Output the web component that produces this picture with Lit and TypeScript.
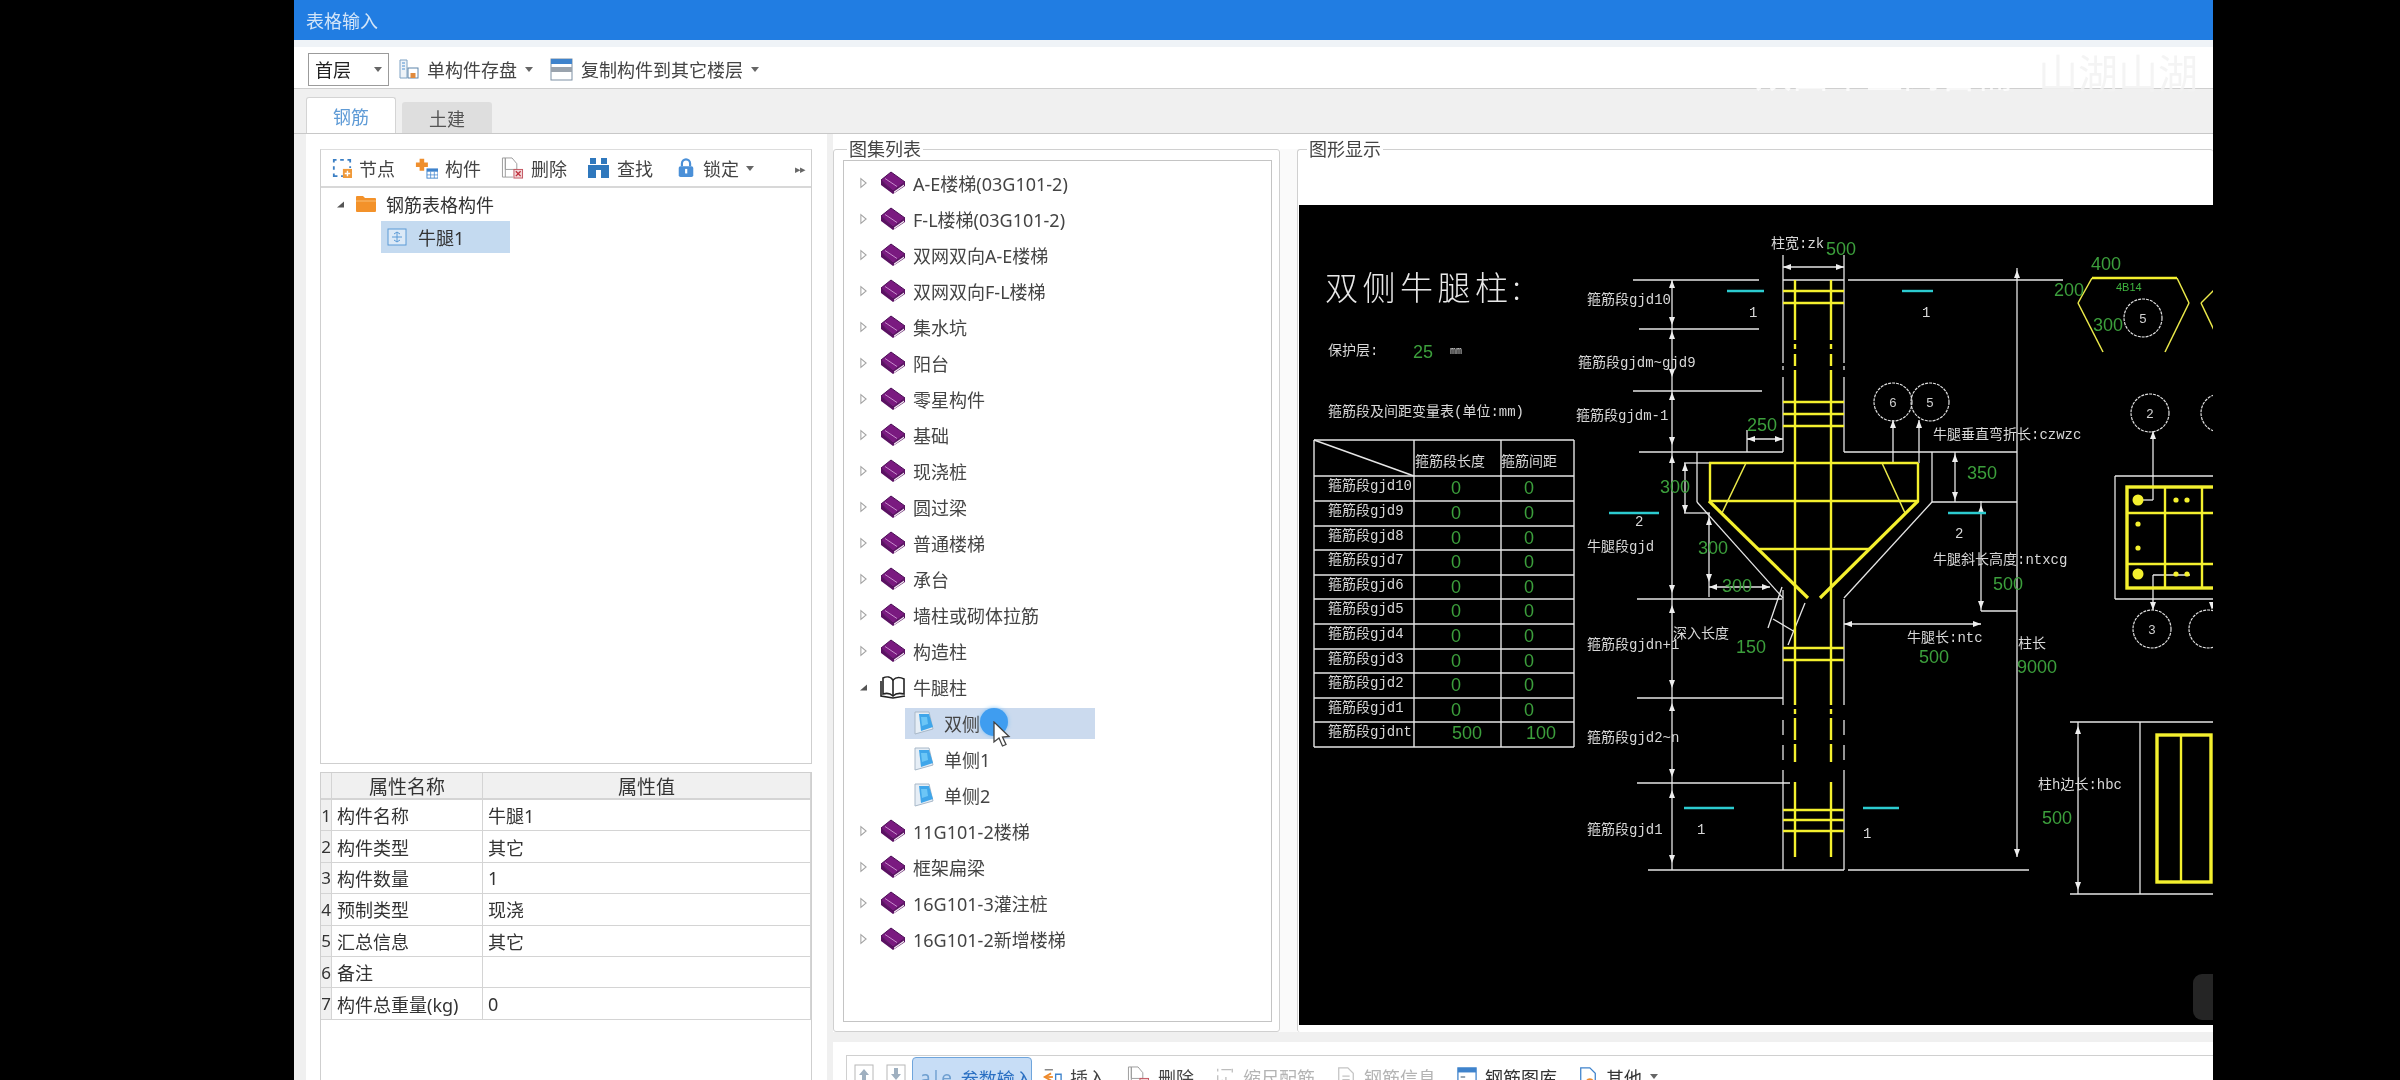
import { css, html, svg, LitElement } from "lit";
import { customElement } from "lit/decorators.js";

type Seg = [number, number, number, number];

const WHITE_LINES: Seg[] = [
  [1633, 280, 1759, 280], [1783, 280, 1844, 280], [1848, 280, 2063, 280],
  [1639, 329, 1759, 329], [1633, 391, 1762, 391], [1639, 452, 1783, 452],
  [1844, 452, 2017, 452], [1932, 502, 2017, 502], [1637, 599, 1782, 599],
  [1637, 698, 1783, 698], [1637, 783, 1790, 783], [1648, 870, 1844, 870],
  [1848, 870, 2029, 870],
  [1783, 255, 1783, 363], [1783, 366, 1783, 370], [1783, 377, 1783, 452],
  [1844, 255, 1844, 363], [1844, 366, 1844, 370], [1844, 377, 1844, 452],
  [1783, 590, 1783, 705], [1783, 720, 1783, 735], [1783, 745, 1783, 760], [1783, 770, 1783, 870],
  [1844, 599, 1844, 705], [1844, 720, 1844, 735], [1844, 745, 1844, 760], [1844, 770, 1844, 870],
  [1783, 267, 1844, 267], [1672, 280, 1672, 870],
  [1697, 452, 1697, 502], [1697, 502, 1783, 598], [1932, 452, 1932, 502], [1932, 502, 1844, 598],
  [1684, 463, 1710, 463], [1685, 463, 1685, 513], [1684, 513, 1710, 513],
  [1709, 513, 1709, 597], [1709, 587, 1770, 587],
  [1747, 430, 1747, 452], [1747, 439, 1783, 439],
  [1893, 420, 1893, 463], [1919, 420, 1919, 463],
  [1955, 452, 1955, 502], [1981, 501, 1981, 611], [1981, 611, 2017, 611],
  [1844, 624, 1981, 624], [2017, 268, 2017, 857],
  [1782, 587, 1768, 628], [1805, 603, 1788, 645], [1773, 619, 1795, 632],
  [2115, 476, 2214, 476], [2115, 476, 2115, 599], [2115, 599, 2214, 599],
  [2138, 500, 2153, 500], [2153, 500, 2153, 431], [2153, 575, 2190, 575], [2153, 575, 2153, 610],
  [2070, 722, 2214, 722], [2070, 894, 2214, 894], [2078, 722, 2078, 894], [2140, 722, 2140, 894],
];

const ARROWS: [number, number, "u" | "d" | "l" | "r"][] = [
  [1783, 267, "l"], [1844, 267, "r"], [1672, 280, "u"], [1672, 325, "d"], [1672, 331, "u"], [1672, 377, "d"],
  [1672, 392, "u"], [1672, 445, "d"], [1672, 455, "u"], [1672, 593, "d"], [1672, 605, "u"], [1672, 688, "d"],
  [1672, 703, "u"], [1672, 777, "d"], [1672, 790, "u"], [1672, 863, "d"],
  [1685, 463, "u"], [1685, 513, "d"], [1709, 517, "u"], [1709, 582, "d"], [1709, 587, "l"], [1770, 587, "r"],
  [1747, 439, "l"], [1783, 439, "r"], [1893, 420, "u"], [1919, 420, "u"],
  [1955, 454, "u"], [1955, 500, "d"], [1981, 505, "u"], [1981, 609, "d"], [1844, 624, "l"], [1981, 624, "r"],
  [2017, 270, "u"], [2017, 857, "d"], [2153, 431, "u"], [2153, 610, "d"], [2212, 610, "d"],
  [2078, 726, "u"], [2078, 890, "d"],
];

const YELLOW_LINES: Seg[] = [
  [1795, 280, 1795, 340], [1795, 344, 1795, 349], [1795, 354, 1795, 366], [1795, 370, 1795, 705],
  [1795, 709, 1795, 714], [1795, 718, 1795, 740], [1795, 744, 1795, 762], [1795, 782, 1795, 857],
  [1831, 280, 1831, 340], [1831, 344, 1831, 349], [1831, 354, 1831, 366], [1831, 370, 1831, 705],
  [1831, 709, 1831, 714], [1831, 718, 1831, 740], [1831, 744, 1831, 762], [1831, 782, 1831, 857],
  [1783, 291, 1844, 291], [1783, 303, 1844, 303], [1783, 402, 1844, 402], [1783, 414, 1844, 414],
  [1783, 426, 1844, 426], [1783, 648, 1844, 648], [1783, 660, 1844, 660], [1783, 810, 1844, 810],
  [1783, 820, 1844, 820], [1783, 831, 1844, 831],
  [1709, 463, 1918, 463], [1710, 463, 1710, 502], [1918, 463, 1918, 502], [1709, 501, 1918, 501],
  [1757, 549, 1870, 549], [2092, 278, 2177, 278],
  [2127, 513, 2214, 513], [2127, 564, 2214, 564], [2165, 487, 2165, 588], [2202, 487, 2202, 588],
  [2181, 735, 2181, 882],
];

const YELLOW_THICK: Seg[] = [[1709, 501, 1808, 598], [1918, 501, 1820, 598]];

const YELLOW_THIN: Seg[] = [
  [1746, 463, 1722, 513], [1882, 463, 1905, 513],
  [2092, 278, 2078, 303], [2078, 303, 2103, 352], [2177, 278, 2189, 303], [2189, 303, 2165, 352],
  [2214, 290, 2201, 303], [2201, 303, 2214, 330],
];

const CYAN_LINES: Seg[] = [
  [1727, 291, 1764, 291], [1902, 291, 1933, 291], [1609, 513, 1659, 513], [1948, 513, 1986, 513],
  [1684, 808, 1734, 808], [1863, 808, 1899, 808],
];

const CIRCLES: [number, number, string][] = [
  [1893, 402, "6"], [1930, 402, "5"], [2143, 318, "5"], [2150, 413, "2"], [2220, 413, ""], [2152, 629, "3"], [2208, 629, ""],
];

const LABELS: [number, number, string][] = [
  [1587, 304, "箍筋段gjd10"], [1578, 367, "箍筋段gjdm~gjd9"], [1576, 420, "箍筋段gjdm-1"], [1587, 551, "牛腿段gjd"],
  [1587, 649, "箍筋段gjdn+1"], [1587, 742, "箍筋段gjd2~n"], [1587, 834, "箍筋段gjd1"], [1673, 638, "深入长度"],
  [1771, 248, "柱宽:zk"], [1933, 439, "牛腿垂直弯折长:czwzc"], [1933, 564, "牛腿斜长高度:ntxcg"], [1907, 642, "牛腿长:ntc"],
  [2018, 648, "柱长"], [2038, 789, "柱h边长:hbc"], [1328, 355, "保护层:"], [1328, 416, "箍筋段及间距变量表(单位:mm)"],
  [1415, 466, "箍筋段长度"], [1501, 466, "箍筋间距"],
  [1749, 317, "1"], [1922, 317, "1"], [1635, 526, "2"], [1955, 538, "2"], [1697, 834, "1"], [1863, 838, "1"],
];

const NUMBERS: [number, number, string][] = [
  [1826, 255, "500"], [1747, 431, "250"], [1660, 493, "300"], [1698, 554, "300"], [1722, 592, "300"], [1736, 653, "150"],
  [1919, 663, "500"], [1967, 479, "350"], [1993, 590, "500"], [2017, 673, "9000"], [2042, 824, "500"],
  [2091, 270, "400"], [2054, 296, "200"], [2093, 331, "300"], [1413, 358, "25"], [1452, 739, "500"], [1526, 739, "100"],
];

const TABLE_ROWS = [476, 501, 526, 550, 575, 599, 624, 649, 673, 698, 722, 747];
const TABLE_NAMES = ["gjd10", "gjd9", "gjd8", "gjd7", "gjd6", "gjd5", "gjd4", "gjd3", "gjd2", "gjd1", "gjdnt"];

function segs(list: Seg[], cls: string) {
  return list.map(([a, b, c, d]) => svg`<line class=${cls} x1=${a} y1=${b} x2=${c} y2=${d}></line>`);
}

function arrowHead([x, y, dir]: [number, number, string]) {
  const pts: Record<string, string> = {
    u: `${x},${y} ${x - 3},${y + 8} ${x + 3},${y + 8}`,
    d: `${x},${y} ${x - 3},${y - 8} ${x + 3},${y - 8}`,
    l: `${x},${y} ${x + 8},${y - 3} ${x + 8},${y + 3}`,
    r: `${x},${y} ${x - 8},${y - 3} ${x - 8},${y + 3}`,
  };
  return svg`<polygon class="head" points=${pts[dir]}></polygon>`;
}

@customElement("cad-diagram")
export class CadDiagram extends LitElement {
  static styles = css`
    :host { display: block; width: 100%; height: 100%; background: #000; }
    svg { display: block; width: 914px; height: 820px; }
    line { stroke-linecap: butt; }
    .w { stroke: #e6e6e6; stroke-width: 1.3; }
    .grid { stroke: #e6e6e6; stroke-width: 1.4; }
    .y { stroke: #f4f02e; stroke-width: 2.4; }
    .yt { stroke: #f4f02e; stroke-width: 3.2; }
    .yn { stroke: #ecea4a; stroke-width: 1.5; }
    .c { stroke: #2ccbd0; stroke-width: 2.4; }
    .head { fill: #eee; }
    .ring { fill: none; stroke: #e0e0e0; stroke-width: 1.2; stroke-dasharray: 3 1; }
    .lbl { font: 14px "Liberation Mono", "Noto Sans CJK SC", monospace; fill: #d8d8d8; }
    .num { font: 18px "Liberation Sans", sans-serif; fill: #3c9f3c; }
    .zero { font: 18px "Liberation Sans", sans-serif; fill: #3c9f3c; text-anchor: middle; }
    .unit { font: 10px "Liberation Mono", monospace; fill: #d8d8d8; }
    .small { font: 11px "Liberation Sans", sans-serif; fill: #3fb53f; }
    .heading { font: 33px "Noto Sans CJK SC", sans-serif; font-weight: 300; fill: #e8e8e8; letter-spacing: 4.5px; }
    .ringtxt { font: 13px "Liberation Mono", monospace; fill: #d0d0d0; text-anchor: middle; }
    .rebar { fill: none; stroke: #f4f02e; stroke-width: 3.4; }
    .dot { fill: #f4f02e; }
    .blob { fill: #252525; }
  `;

  render() {
    return html`<svg viewBox="1299 205 914 820">
      <text class="heading" x="1325" y="300">双侧牛腿柱:</text>
      <text class="unit" x="1450" y="354">mm</text>
      ${TABLE_ROWS.map((y) => svg`<line class="grid" x1="1314" y1=${y} x2="1574" y2=${y}></line>`)}
      <line class="grid" x1="1314" y1="440" x2="1574" y2="440"></line>
      <line class="grid" x1="1314" y1="440" x2="1314" y2="747"></line>
      <line class="grid" x1="1414" y1="440" x2="1414" y2="747"></line>
      <line class="grid" x1="1501" y1="440" x2="1501" y2="747"></line>
      <line class="grid" x1="1574" y1="440" x2="1574" y2="747"></line>
      <line class="grid" x1="1314" y1="440" x2="1414" y2="476"></line>
      ${TABLE_NAMES.map((name, i) => svg`
        <text class="lbl" x="1328" y=${TABLE_ROWS[i] + 14}>箍筋段${name}</text>
        ${i < 10 ? svg`<text class="zero" x="1456" y=${TABLE_ROWS[i] + 18}>0</text>
        <text class="zero" x="1529" y=${TABLE_ROWS[i] + 18}>0</text>` : ""}
      `)}
      ${segs(WHITE_LINES, "w")}
      ${ARROWS.map(arrowHead)}
      ${segs(YELLOW_LINES, "y")}
      ${segs(YELLOW_THICK, "yt")}
      ${segs(YELLOW_THIN, "yn")}
      ${segs(CYAN_LINES, "c")}
      ${CIRCLES.map(([x, y, t]) => svg`<circle class="ring" cx=${x} cy=${y} r="19"></circle>
        <text class="ringtxt" x=${x} y=${y + 5}>${t}</text>`)}
      ${LABELS.map(([x, y, t]) => svg`<text class="lbl" x=${x} y=${y}>${t}</text>`)}
      ${NUMBERS.map(([x, y, t]) => svg`<text class="num" x=${x} y=${y}>${t}</text>`)}
      <text class="small" x="2116" y="291">4B14</text>
      <rect class="rebar" x="2127" y="487" width="95" height="101"></rect>
      <circle class="dot" cx="2138" cy="500" r="5.5"></circle>
      <circle class="dot" cx="2138" cy="574" r="5.5"></circle>
      ${[[2176, 500], [2187, 500], [2138, 524], [2138, 548], [2176, 574], [2187, 574]].map(
        ([x, y]) => svg`<circle class="dot" cx=${x} cy=${y} r="2.6"></circle>`
      )}
      <rect class="rebar" x="2157" y="735" width="54" height="147"></rect>
      <rect class="blob" x="2193" y="974" width="30" height="46" rx="9"></rect>
    </svg>`;
  }
}

const tri = html`<svg class="tw" viewBox="0 0 8 12"><path d="M1 1 L7 6 L1 11 Z" fill="#fff" stroke="#a3a3a3" stroke-width="1.2"/></svg>`;
const triOpen = html`<svg class="tw" viewBox="0 0 8 12"><path d="M0 10 L8 3 L8 10 Z" fill="#555"/></svg>`;

const bookIcon = html`<svg class="book" viewBox="0 0 26 24">
  <path d="M1 9 L11 1 L25 11 L13 20 Z" fill="#7a1a80" stroke="#4b0e55"/>
  <path d="M5 7.5 L17 15.5" stroke="#c68ccb" stroke-width="1"/>
  <path d="M1 9 L1 14 L13 23 L25 15 L25 11 L13 20 Z" fill="#5a1062"/>
  <path d="M14 20.5 L24 13.5 L24 15 L14 22 Z" fill="#f4f0f4"/>
</svg>`;

const openBookIcon = html`<svg class="book" viewBox="0 0 26 24">
  <path d="M3 3 C7 1 11 2 13 5 C16 2 20 2 24 4 L24 19 C20 18 16 18 13 21 C10 18 6 18 3 19 Z" fill="#fff" stroke="#222" stroke-width="1.6"/>
  <path d="M13 5 L13 21 M1 6 L1 21 L13 23 L25 21" fill="none" stroke="#222" stroke-width="1.6"/>
</svg>`;

const docIcon = html`<svg class="doc" viewBox="0 0 22 24">
  <path d="M2 1 H16 L20 18 L2 23 Z" fill="#e6eef6" stroke="#a8b8c8"/>
  <path d="M6 3 H16 L20 16 L8 20 Z" fill="#3fa6ea"/>
  <path d="M8 6 H14 L15 13 L9 15 Z" fill="#6cc6f6"/>
</svg>`;

const caret = html`<svg class="caret" viewBox="0 0 8 5"><path d="M0 0 H8 L4 5 Z" fill="#666"/></svg>`;

const saveIcon = html`<svg class="ic" viewBox="0 0 20 20">
  <path d="M1 1 H8 V19 H1 Z" fill="#eef3f8" stroke="#7fa2c4"/>
  <path d="M3 4 H6 M3 7 H6 M3 10 H6" stroke="#4d8fd0"/>
  <rect x="9" y="9" width="10" height="10" fill="#fff" stroke="#5d84aa"/>
  <rect x="11.5" y="14" width="5" height="5" fill="#e08a3c"/>
</svg>`;

const copyIcon = html`<svg class="ic lg" viewBox="0 0 23 23">
  <rect x="1" y="1" width="21" height="21" fill="#fff" stroke="#7c8fa3"/>
  <rect x="1" y="1" width="21" height="5" fill="#3f83cc"/>
  <rect x="1" y="9" width="21" height="5" fill="#9aa3ad"/>
</svg>`;

const nodeIcon = html`<svg class="ic" viewBox="0 0 22 22">
  <path d="M5 2 H2 V5 M2 9 V13 M2 17 V20 H6 M10 20 H12 M9 2 H13 M17 2 H20 V5 M20 9 V11" fill="none" stroke="#3b7fc4" stroke-width="2"/>
  <rect x="12" y="12" width="10" height="10" fill="#f09a3a"/>
  <path d="M17 14 V20 M14 17 H20" stroke="#fff" stroke-width="1.5"/>
</svg>`;

const partIcon = html`<svg class="ic wide" viewBox="0 0 25 22">
  <path d="M5 1 H10 V5 H14 V10 H10 V14 H5 V10 H1 V5 H5 Z" fill="#ef8f2e"/>
  <rect x="13" y="12" width="12" height="10" fill="#fff" stroke="#3f83cc"/>
  <rect x="13" y="12" width="12" height="3" fill="#3f83cc"/>
  <path d="M17 15 V22 M21 15 V22 M13 18.5 H25" stroke="#3f83cc" stroke-width=".8"/>
</svg>`;

const deleteIcon = html`<svg class="ic wide" viewBox="0 0 23 23">
  <path d="M1 1 H4 V21 H1 Z M4 1 H11 L16 7 V13 H4 Z" fill="#fff" stroke="#9a9a9a"/>
  <path d="M4 21 H12" stroke="#9a9a9a"/>
  <rect x="13" y="13" width="9" height="9" fill="#f2d6d8" stroke="#c25560"/>
  <path d="M15 15 L20 20 M20 15 L15 20" stroke="#c0303c" stroke-width="1.4"/>
</svg>`;

const findIcon = html`<svg class="ic wide" viewBox="0 0 23 22">
  <rect x="3" y="1" width="6" height="6" fill="#2f78bd"/>
  <rect x="14" y="1" width="6" height="6" fill="#2f78bd"/>
  <path d="M1 8 H22 V21 H14 V13 H9 V21 H1 Z" fill="#2f78bd"/>
</svg>`;

const lockIcon = html`<svg class="ic" viewBox="0 0 18 22">
  <path d="M4.5 9 V6 A4.5 4.5 0 0 1 13.5 6 V9" fill="none" stroke="#4a90d8" stroke-width="2.4"/>
  <rect x="1" y="9" width="16" height="12" rx="2" fill="#4a90d8"/>
  <rect x="8" y="12" width="2.4" height="5" fill="#fff"/>
</svg>`;

const folderIcon = html`<svg class="folder" viewBox="0 0 22 18">
  <path d="M1 2 A1 1 0 0 1 2 1 H8 L10 3 H20 A1 1 0 0 1 21 4 V16 A1 1 0 0 1 20 17 H2 A1 1 0 0 1 1 16 Z" fill="#f3922a"/>
  <path d="M1 6 H21" stroke="#f9bd72"/>
</svg>`;

const partNodeIcon = html`<svg class="part" viewBox="0 0 20 18">
  <rect x="1" y="1" width="18" height="16" fill="#dbe9f7" stroke="#5b9ad6"/>
  <path d="M10 4 V14 M5 9 H15 M7 6 L10 4 L13 6 M7 12 L10 14 L13 12" fill="none" stroke="#5b9ad6"/>
</svg>`;

const upIcon = html`<svg class="ic" viewBox="0 0 20 20">
  <rect x="1" y="1" width="18" height="18" fill="#fff" stroke="#b8b8b8"/>
  <path d="M10 5 L15 11 H12 V17 H8 V11 H5 Z" fill="#9fb0c0"/>
</svg>`;

const downIcon = html`<svg class="ic" viewBox="0 0 20 20">
  <rect x="1" y="1" width="18" height="18" fill="#fff" stroke="#b8b8b8"/>
  <path d="M10 16 L15 10 H12 V4 H8 V10 H5 Z" fill="#9fb0c0"/>
</svg>`;

const insertIcon = html`<svg class="ic" viewBox="0 0 22 22">
  <path d="M3 3 H12 M3 20 H12" stroke="#888" stroke-width="1.5"/>
  <path d="M10 7 L3 11 L10 15" fill="none" stroke="#ee8a2c" stroke-width="2"/>
  <path d="M3 11 H12" stroke="#ee8a2c" stroke-width="2"/>
  <path d="M15 8 H21 V15 H15 Z" fill="none" stroke="#3f83cc" stroke-width="1.5"/>
</svg>`;

const scaleIcon = html`<svg class="ic" viewBox="0 0 20 22">
  <path d="M2 2 V5 M2 9 V20 H6 M6 3 H17 M18 2 V6 M7 20 V14 M11 20 V11" fill="none" stroke="#bdbdbd" stroke-width="1.4"/>
</svg>`;

const infoIcon = html`<svg class="ic" viewBox="0 0 20 22">
  <path d="M2 1 H12 L18 7 V21 H2 Z" fill="#fff" stroke="#c4c4c4" stroke-width="1.4"/>
  <path d="M6 10 H14 M6 14 H14" stroke="#c4c4c4" stroke-width="1.4"/>
</svg>`;

const libIcon = html`<svg class="ic" viewBox="0 0 22 22">
  <rect x="1" y="1" width="20" height="20" fill="#fff" stroke="#3f83cc" stroke-width="1.4"/>
  <rect x="1" y="1" width="20" height="5" fill="#3f83cc"/>
  <path d="M4 11 H9 M4 16 H17" stroke="#7a8a9a" stroke-width="1.6"/>
</svg>`;

const otherIcon = html`<svg class="ic" viewBox="0 0 20 22">
  <path d="M2 1 H12 L18 7 V21 H2 Z" fill="#fff" stroke="#3f83cc" stroke-width="1.4"/>
  <circle cx="12" cy="17" r="4.5" fill="#ee8a2c"/>
  <circle cx="12" cy="17" r="1.7" fill="#fff"/>
</svg>`;

const TREE_TOP = ["A-E楼梯(03G101-2)", "F-L楼梯(03G101-2)", "双网双向A-E楼梯", "双网双向F-L楼梯", "集水坑", "阳台", "零星构件", "基础", "现浇桩", "圆过梁", "普通楼梯", "承台", "墙柱或砌体拉筋", "构造柱"];
const TREE_BOTTOM = ["11G101-2楼梯", "框架扁梁", "16G101-3灌注桩", "16G101-2新增楼梯"];
const PROPS = [
  ["构件名称", "牛腿1"], ["构件类型", "其它"], ["构件数量", "1"], ["预制类型", "现浇"],
  ["汇总信息", "其它"], ["备注", ""], ["构件总重量(kg)", "0"],
];

@customElement("app-root")
export class AppRoot extends LitElement {
  static styles = css`
    :host {
      display: block;
      width: 2400px;
      height: 1080px;
      background: #000;
      overflow: hidden;
      font-family: "Noto Sans", "Noto Sans CJK SC", sans-serif;
      font-size: 18px;
      color: #444;
    }
    .window {
      position: relative;
      margin-left: 294px;
      width: 1919px;
      height: 1080px;
      background: #f0f0f0;
      display: flex;
      flex-direction: column;
      overflow: hidden;
      filter: blur(0.4px);
    }
    .title {
      height: 40px;
      flex: none;
      background: #217de2;
      color: #d3e5f8;
      display: flex;
      align-items: center;
      padding-left: 12px;
      box-sizing: border-box;
    }
    .floorbar {
      height: 49px;
      flex: none;
      box-sizing: border-box;
      margin-top: 0;
      padding: 3px 0 0 14px;
      background: #fff;
      border-top: 7px solid #eff3f7;
      border-bottom: 1px solid #cfcfcf;
      display: flex;
      align-items: center;
      gap: 8px;
    }
    .select {
      width: 81px;
      height: 33px;
      box-sizing: border-box;
      border: 1px solid #9b9b9b;
      background: #fff;
      color: #222;
      display: flex;
      align-items: center;
      justify-content: space-between;
      padding: 0 6px 0 6px;
      margin-right: 2px;
    }
    .tool { display: flex; align-items: center; gap: 8px; white-space: nowrap; }
    .caret { width: 8px; height: 5px; flex: none; }
    .ic { width: 20px; height: 20px; flex: none; }
    .ic.lg { width: 23px; height: 23px; }
    .ic.wide { width: 23px; height: 22px; }
    .spaced { margin-right: 9px; }
    .tabs {
      height: 45px;
      flex: none;
      box-sizing: border-box;
      padding-left: 12px;
      display: flex;
      align-items: flex-end;
      gap: 6px;
      border-bottom: 1px solid #c8c8c8;
    }
    .tab {
      width: 90px;
      height: 31px;
      display: flex;
      align-items: center;
      justify-content: center;
      background: #dedede;
      color: #555;
      border-radius: 3px 3px 0 0;
    }
    .tab.on {
      height: 36px;
      background: #fff;
      color: #5f9bd6;
      border: 1px solid #d4d4d4;
      border-bottom: none;
      box-sizing: border-box;
    }
    .main { flex: 1; min-height: 0; display: flex; padding-left: 12px; }
    .left {
      width: 521px;
      flex: none;
      box-sizing: border-box;
      background: #fff;
      padding: 15px 15px 0 14px;
      display: flex;
      flex-direction: column;
      gap: 8px;
    }
    .tree-panel {
      height: 615px;
      flex: none;
      box-sizing: border-box;
      border: 1px solid #cfcfcf;
      border-top-color: #ddd;
      display: flex;
      flex-direction: column;
    }
    .left-bar {
      height: 38px;
      flex: none;
      box-sizing: border-box;
      background: #fff;
      border-bottom: 2px solid #d8d8d8;
      padding-left: 11px;
      display: flex;
      align-items: center;
      gap: 20px;
    }
    .left-bar .tool { gap: 7px; }
    .lock { margin-left: 3px; }
    .more { margin-left: auto; margin-right: 6px; font-size: 11px; color: #666; letter-spacing: -1px; }
    .tree-root { display: flex; align-items: center; height: 34px; padding: 0 0 0 16px; color: #333; margin-top: -1px; }
    .tree-root .tw { margin-right: 11px; }
    .folder { width: 22px; height: 18px; margin-right: 9px; }
    .tw { width: 7px; height: 12px; flex: none; }
    .tree-leaf {
      margin-left: 60px;
      width: 129px;
      height: 32px;
      box-sizing: border-box;
      background: #c4daf0;
      display: flex;
      align-items: center;
      gap: 11px;
      padding-left: 6px;
      color: #333;
    }
    .part { width: 20px; height: 18px; }
    .props {
      flex: 1;
      min-height: 0;
      border: 1px solid #cfcfcf;
      border-bottom: none;
      display: grid;
      grid-template-columns: 11px 151px 1fr;
      grid-template-rows: 27px;
      grid-auto-rows: 31.4px;
      color: #333;
    }
    .props > div {
      box-sizing: border-box;
      border-bottom: 1px solid #d4d4d4;
      border-right: 1px solid #d4d4d4;
      display: flex;
      align-items: center;
      padding-left: 5px;
      white-space: nowrap;
    }
    .props .head {
      background: #f0f0f0;
      justify-content: center;
      padding: 0;
      font-size: 19px;
      border-bottom: 2px solid #d4d4d4;
    }
    .props .idx { background: #f0f0f0; padding: 0; justify-content: center; font-size: 17px; overflow: hidden; }
    .right { flex: 1; min-width: 0; display: flex; flex-direction: column; background: #f0f0f0; margin-left: 6px; }
    .groups {
      height: 898px;
      flex: none;
      box-sizing: border-box;
      padding-top: 15px;
      background: #fff;
      display: flex;
    }
    .group { position: relative; box-sizing: border-box; border: 1px solid #d0d0d0; border-radius: 3px; }
    .legend { position: absolute; top: -12px; left: 13px; padding: 0 2px; background: #fff; color: #444; line-height: 22px; }
    .list-group { width: 447px; flex: none; padding: 10px 7px 9px 9px; }
    .list-box {
      position: relative;
      height: 100%;
      box-sizing: border-box;
      border: 1px solid #c4c4c4;
      padding: 4px 0 0 16px;
      overflow: hidden;
    }
    .row { display: flex; align-items: center; height: 36px; white-space: nowrap; }
    .row .tw { margin-right: 13px; }
    .book { width: 26px; height: 24px; margin-right: 7px; flex: none; }
    .sub { padding-left: 45px; }
    .sub-inner { display: flex; align-items: center; gap: 9px; width: 190px; height: 31px; box-sizing: border-box; padding-left: 8px; }
    .sub-inner.on { background: #cbdaee; }
    .doc { width: 22px; height: 24px; flex: none; }
    .touch {
      position: absolute;
      left: 136px;
      top: 547px;
      width: 28px;
      height: 28px;
      border-radius: 50%;
      background: #3f9df0;
      box-shadow: 0 0 4px #7fc0f5;
    }
    .cursor { position: absolute; left: 148px; top: 560px; width: 20px; height: 28px; }
    .splitter { width: 17px; flex: none; background: #fafafa; }
    .view-group {
      flex: 1;
      min-width: 0;
      padding: 55px 0 6px 1px;
      border-right: none;
      border-bottom: none;
    }
    .view-group .legend { left: 9px; }
    .canvas { height: 820px; overflow: hidden; }
    .bottom-bar {
      flex: 1;
      min-height: 0;
      margin-top: 10px;
      background: #fff;
      padding-top: 13px;
      box-sizing: border-box;
    }
    .bottom-inner {
      height: 40px;
      margin-left: 13px;
      box-sizing: border-box;
      border: 1px solid #d0d0d0;
      border-right: none;
      padding-left: 7px;
      display: flex;
      align-items: flex-start;
      gap: 21px;
      overflow: hidden;
    }
    .bottom-inner .tool { height: 41px; }
    .arrows { display: flex; gap: 12px; margin-top: 8px; margin-right: -15px; }
    .bottom-inner .active {
      width: 120px;
      box-sizing: border-box;
      margin: 1px 0 0 0;
      border: 1px solid #6fa5dc;
      border-radius: 4px 4px 0 0;
      background: #c7ddf6;
      color: #2a6fc2;
      padding-left: 7px;
      margin-right: -11px;
    }
    .glyph { font-family: "Noto Sans", sans-serif; color: #6f9fd0; font-size: 19px; margin-right: 1px; }
    .muted { color: #b4b4b4; }
    .dark { color: #333; }
    .watermark {
      position: absolute;
      left: 1461px;
      top: 46px;
      font-family: "Noto Sans CJK SC", sans-serif;
      font-size: 37px;
      color: #fff;
      opacity: 0.85;
      white-space: nowrap;
      line-height: 50px;
      pointer-events: none;
    }
    .watermark b { font-weight: 400; color: #f3f3f3; margin-left: 24px; font-size: 40px; }
  `;

  render() {
    return html`<div class="window">
      <div class="title">表格输入</div>
      <div class="floorbar">
        <div class="select"><span>首层</span>${caret}</div>
        <div class="tool spaced">${saveIcon}<span>单构件存盘</span>${caret}</div>
        <div class="tool">${copyIcon}<span>复制构件到其它楼层</span>${caret}</div>
      </div>
      <div class="tabs">
        <div class="tab on">钢筋</div>
        <div class="tab">土建</div>
      </div>
      <div class="main">
        <div class="left">
          <div class="tree-panel">
            <div class="left-bar">
              <div class="tool">${nodeIcon}<span>节点</span></div>
              <div class="tool">${partIcon}<span>构件</span></div>
              <div class="tool">${deleteIcon}<span>删除</span></div>
              <div class="tool">${findIcon}<span>查找</span></div>
              <div class="tool lock">${lockIcon}<span>锁定</span>${caret}</div>
              <span class="more">▸▸</span>
            </div>
            <div class="tree-root">${triOpen}${folderIcon}<span>钢筋表格构件</span></div>
            <div class="tree-leaf">${partNodeIcon}<span>牛腿1</span></div>
          </div>
          <div class="props">
            <div class="head"></div><div class="head">属性名称</div><div class="head">属性值</div>
            ${PROPS.map((p, i) => html`<div class="idx">${i + 1}</div><div>${p[0]}</div><div>${p[1]}</div>`)}
          </div>
        </div>
        <div class="right">
          <div class="groups">
            <section class="group list-group">
              <span class="legend">图集列表</span>
              <div class="list-box">
                ${TREE_TOP.map((t) => html`<div class="row">${tri}${bookIcon}<span>${t}</span></div>`)}
                <div class="row">${triOpen}${openBookIcon}<span>牛腿柱</span></div>
                <div class="row sub"><div class="sub-inner on">${docIcon}<span>双侧</span></div></div>
                <div class="row sub"><div class="sub-inner">${docIcon}<span>单侧1</span></div></div>
                <div class="row sub"><div class="sub-inner">${docIcon}<span>单侧2</span></div></div>
                ${TREE_BOTTOM.map((t) => html`<div class="row">${tri}${bookIcon}<span>${t}</span></div>`)}
                <div class="touch"></div>
                <svg class="cursor" viewBox="0 0 20 28">
                  <path d="M2 1 L2 21 L7 17 L10.5 25 L14 23.5 L10.5 16 L17 15.5 Z" fill="#fff" stroke="#444" stroke-width="1.3"/>
                </svg>
              </div>
            </section>
            <div class="splitter"></div>
            <section class="group view-group">
              <span class="legend">图形显示</span>
              <div class="canvas"><cad-diagram></cad-diagram></div>
            </section>
          </div>
          <div class="bottom-bar">
            <div class="bottom-inner">
              <div class="arrows">${upIcon}${downIcon}</div>
              <div class="tool active"><span class="glyph">a|e</span><span>参数输入</span></div>
              <div class="tool">${insertIcon}<span>插入</span></div>
              <div class="tool">${deleteIcon}<span>删除</span></div>
              <div class="tool muted">${scaleIcon}<span>缩尺配筋</span></div>
              <div class="tool muted">${infoIcon}<span>钢筋信息</span></div>
              <div class="tool dark">${libIcon}<span>钢筋图库</span></div>
              <div class="tool dark">${otherIcon}<span>其他</span>${caret}</div>
            </div>
          </div>
        </div>
      </div>
      <div class="watermark">双面牛至阅吉斋<b>山湖山湖</b></div>
    </div>`;
  }
}

declare global {
  interface HTMLElementTagNameMap {
    "app-root": AppRoot;
    "cad-diagram": CadDiagram;
  }
}
